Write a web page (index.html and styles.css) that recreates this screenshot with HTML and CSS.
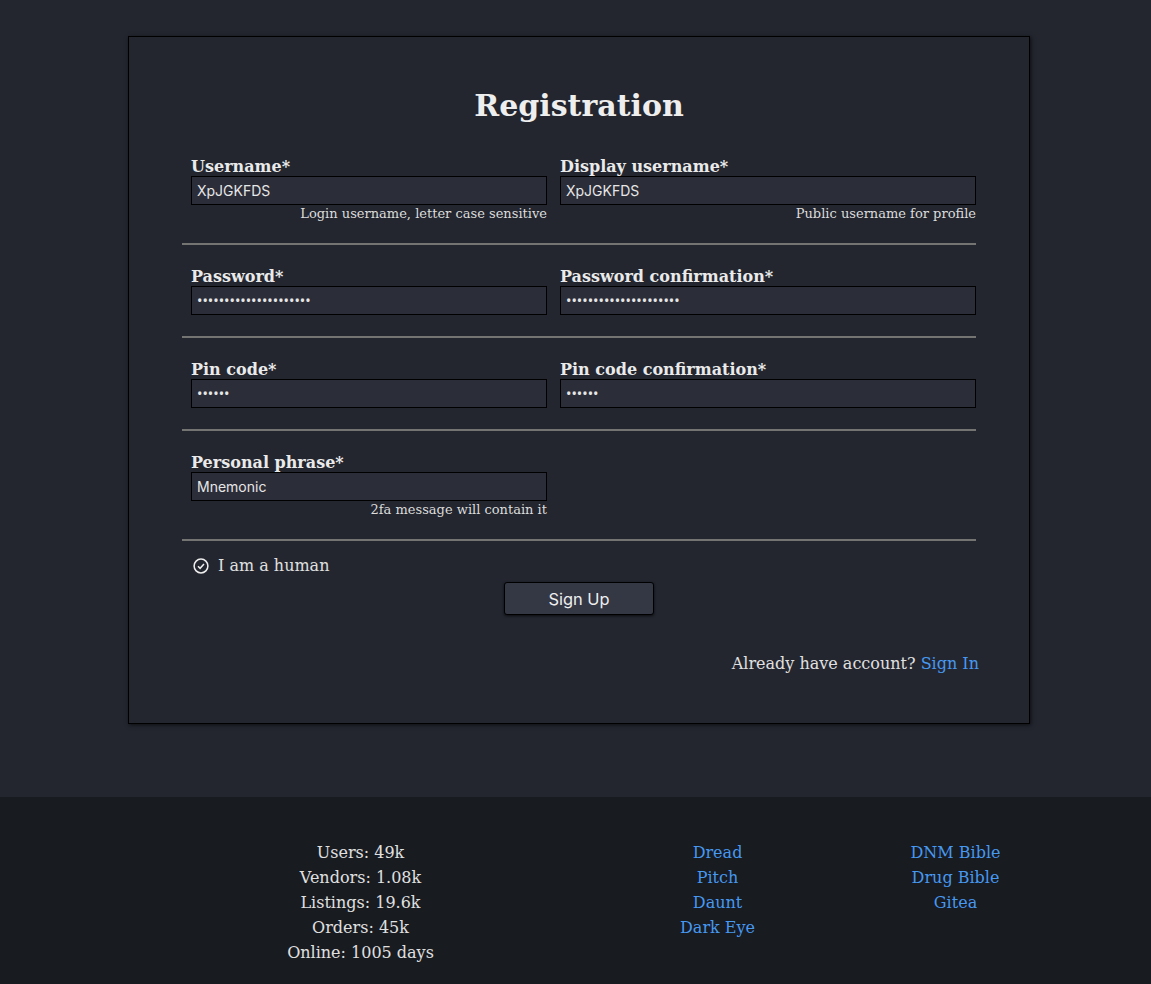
FILE: index.html
```html
<!DOCTYPE html>
<html lang="en">
<head>
<meta charset="utf-8">
<title>Registration</title>
<link rel="stylesheet" href="styles.css">
</head>
<body>
<main class="page">
  <section class="card">
    <h1 class="title">Registration</h1>
    <form class="form">
      <div class="row">
        <div class="field left"><label class="label">Username*</label><input class="input" type="text" value="XpJGKFDS"><div class="hint">Login username, letter case sensitive</div></div>
        <div class="field right"><label class="label">Display username*</label><input class="input" type="text" value="XpJGKFDS"><div class="hint">Public username for profile</div></div>
      </div>
      <hr class="rule">
      <div class="row">
        <div class="field left"><label class="label">Password*</label><input class="input pw" type="password" value="aaaaaaaaaaaaaaaaaaaaa"></div>
        <div class="field right"><label class="label">Password confirmation*</label><input class="input pw" type="password" value="aaaaaaaaaaaaaaaaaaaaa"></div>
      </div>
      <hr class="rule">
      <div class="row">
        <div class="field left"><label class="label">Pin code*</label><input class="input pw" type="password" value="123456"></div>
        <div class="field right"><label class="label">Pin code confirmation*</label><input class="input pw" type="password" value="123456"></div>
      </div>
      <hr class="rule">
      <div class="row">
        <div class="field left"><label class="label">Personal phrase*</label><input class="input" type="text" value="Mnemonic"><div class="hint">2fa message will contain it</div></div>
      </div>
      <hr class="rule">
      <div class="human">
        <svg class="check" viewBox="0 0 16 16" width="16" height="16" aria-hidden="true"><circle cx="8" cy="8" r="6.9" fill="none" stroke="currentColor" stroke-width="1.5"/><path d="M5 8.2l2.1 2.1L11 6" fill="none" stroke="currentColor" stroke-width="1.5"/></svg>
        <span>I am a human</span>
      </div>
      <div class="actions"><button class="btn" type="button">Sign Up</button></div>
    </form>
    <p class="signin">Already have account? <a href="#">Sign In</a></p>
  </section>
</main>
<footer class="footer">
  <div class="col stats"><div>Users: 49k</div><div>Vendors: 1.08k</div><div>Listings: 19.6k</div><div>Orders: 45k</div><div>Online: 1005 days</div></div>
  <div class="col links1"><a href="#">Dread</a><a href="#">Pitch</a><a href="#">Daunt</a><a href="#">Dark Eye</a></div>
  <div class="col links2"><a href="#">DNM Bible</a><a href="#">Drug Bible</a><a href="#">Gitea</a></div>
</footer>
</body>
</html>
```
FILE: styles.css
```css
* { box-sizing: border-box; }
html, body { margin: 0; padding: 0; }
body {
  background: #23262f;
  color: #e6e6e6;
  font-family: "DejaVu Serif", serif;
  font-size: 16px;
  height: 984px;
  overflow: hidden;
}
a { color: #4698f0; text-decoration: none; }
.page { height: 797px; padding: 36px 121px 0 128px; }
.card {
  width: 902px;
  height: 688px;
  border: 1px solid #000;
  box-shadow: 1px 1px 4px rgba(0, 0, 0, .65);
  background: #23262f;
  padding: 50px 50px 0 53px;
}
.title {
  margin: 0;
  height: 37px;
  line-height: 37px;
  font-size: 30px;
  font-weight: 700;
  text-align: center;
  padding-right: 3px;
  color: #eee;
}
.form { margin-top: 33px; width: 794px; }
.row { display: flex; gap: 13px; padding-left: 9px; }
.field { display: flex; flex-direction: column; }
.left { width: 356px; }
.right { width: 416px; }
.label { font-weight: 700; font-size: 16px; line-height: 19px; height: 19px; color: #eaeaea; }
.input {
  height: 29px;
  width: 100%;
  border: 1px solid #000;
  background: #2b2d38;
  color: #e6e6e6;
  font-family: Inter, sans-serif;
  font-size: 14px;
  padding: 0 5px;
  outline: none;
  border-radius: 0;
}
.pw { font-family: "Noto Sans", sans-serif; font-size: 14.4px; }
.hint { font-size: 13px; line-height: 17px; height: 17px; margin-top: 0; text-align: right; color: #dcdcdc; }
.rule { margin: 21px 0 22px; border: 0; height: 2px; background: #747473; }
.human { display: flex; align-items: center; gap: 9px; padding-left: 11px; height: 25px; margin-top: -10px; font-size: 16px; color: #e0e0e0; }
.check { color: #eee; flex: none; }
.actions { display: flex; justify-content: center; margin-top: 4px; }
.btn {
  width: 150px;
  height: 33px;
  border: 1px solid #000;
  border-radius: 3px;
  background: #343744;
  color: #eee;
  font-family: Inter, sans-serif;
  font-size: 16.4px;
  box-shadow: 0 1px 3px rgba(0, 0, 0, .7);
  padding: 0;
}
.signin { margin: 36px 0 0; text-align: right; line-height: 25px; width: 797px; color: #e0e0e0; }
.footer {
  height: 187px;
  background: #181b20;
  padding-top: 43px;
  display: grid;
  grid-template-columns: 360.5px 357px 238px;
  line-height: 25px;
  color: #e0e0e0;
}
.col { display: flex; flex-direction: column; align-items: center; width: 0; justify-self: end; white-space: nowrap; }
```
